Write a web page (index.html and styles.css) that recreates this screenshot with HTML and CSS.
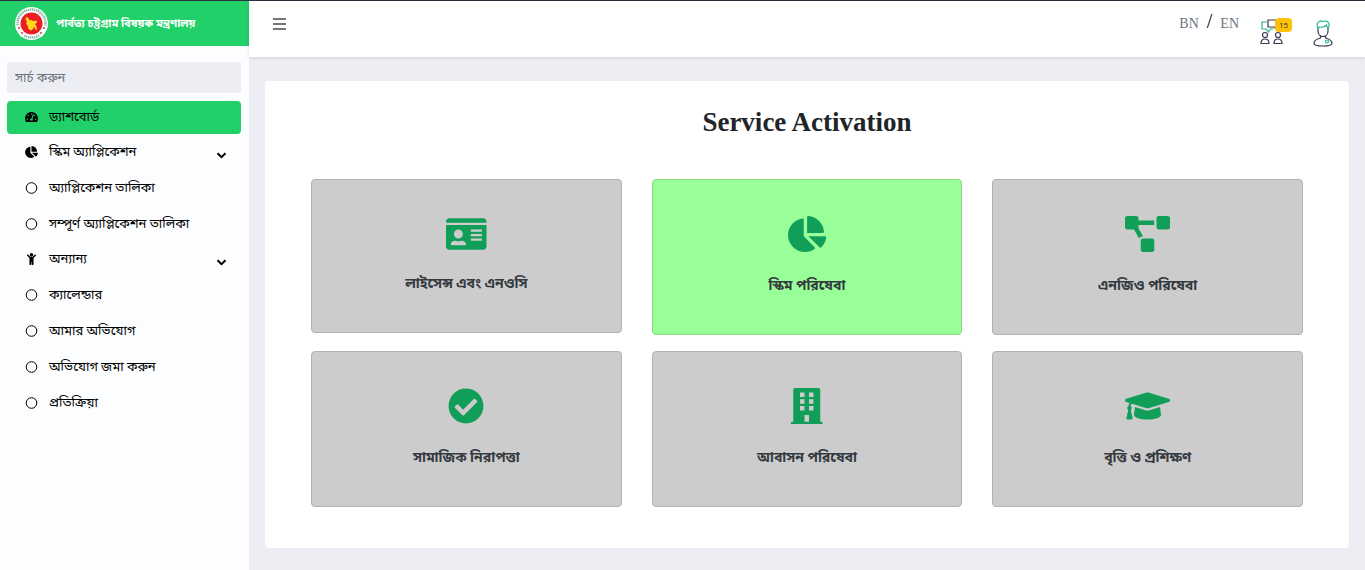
FILE: index.html
```html
<!DOCTYPE html>
<html lang="bn">
<head>
<meta charset="utf-8">
<meta name="viewport" content="width=device-width, initial-scale=1">
<title>Service Activation</title>
<link rel="stylesheet" href="styles.css">
</head>
<body>
<svg class="defs" aria-hidden="true">
  <symbol id="pie" viewBox="0 0 544 512"><path d="M527.79 288H290.5l158.03 158.03c6.04 6.04 15.98 6.53 22.19.68 38.7-36.46 65.32-85.61 73.13-140.86 1.34-9.46-6.51-17.85-16.06-17.85zm-15.83-64.8C503.72 103.74 408.26 8.28 288.8.04 279.68-.59 272 7.1 272 16.24V240h223.77c9.14 0 16.82-7.68 16.19-16.8zM224 288V50.71c0-9.55-8.39-17.4-17.84-16.06C86.99 51.49-4.1 155.6.14 280.37 4.5 408.51 114.83 513.59 243.03 511.98c50.4-.63 96.97-16.87 135.26-44.03 7.9-5.6 8.42-17.23 1.57-24.08L224 288z"/></symbol>
  <symbol id="ring" viewBox="0 0 12 12"><circle cx="6" cy="6" r="5.3" fill="none" stroke="currentColor"/></symbol>
  <symbol id="chevron" viewBox="0 0 10 7"><path d="M1 1.2l4 4 4-4" fill="none" stroke="currentColor" stroke-width="2"/></symbol>
</svg>
<div class="app">
  <aside class="sidebar">
    <a class="brand" href="#">
      <svg class="brand-logo" viewBox="0 0 66 66" aria-hidden="true">
        <circle cx="33" cy="33" r="33" fill="#fff"/>
        <circle cx="33" cy="33" r="28" fill="none" stroke="#7fb9a0" stroke-width="5" stroke-dasharray="2.5 1.5"/>
        <path d="M2 38l9 -1 8 19 -7 4zM64 38l-9 -1 -8 19 7 4z" fill="#fff"/>
        <g fill="#e5323a"><circle cx="8" cy="42" r="2"/><circle cx="14" cy="52" r="2"/><circle cx="58" cy="42" r="2"/><circle cx="52" cy="52" r="2"/></g>
        <circle cx="33" cy="33" r="22" fill="#ec1c24"/>
        <path d="M22 20l5 2 2 5 4-1 3 2 7-1 1 4-4 3 3 5 1 8-4-3-2-5-2 5-4 3-5-3-2-7-3-4 2-3-3-5z" fill="#fcd91c"/>
      </svg>
      <span>পার্বত্য চট্টগ্রাম বিষয়ক মন্ত্রণালয়</span>
    </a>
    <div class="side-body">
      <input class="search" type="search" placeholder="সার্চ করুন" aria-label="সার্চ করুন">
      <nav class="menu">
        <a class="item active" href="#"><svg class="mi" viewBox="0 0 576 512"><path d="M288 32C128.94 32 0 160.94 0 320c0 52.8 14.25 102.26 39.06 144.8 5.61 9.62 16.3 15.2 27.44 15.2h443c11.14 0 21.83-5.58 27.44-15.2C561.75 422.26 576 372.8 576 320c0-159.06-128.94-288-288-288zm0 64c14.71 0 26.58 10.13 30.32 23.65-1.11 2.26-2.64 4.23-3.45 6.67l-9.22 27.67c-5.13 3.49-10.97 6.01-17.64 6.01-17.67 0-32-14.33-32-32S270.33 96 288 96zM96 384c-17.67 0-32-14.33-32-32s14.33-32 32-32 32 14.33 32 32-14.33 32-32 32zm48-160c-17.67 0-32-14.33-32-32s14.33-32 32-32 32 14.33 32 32-14.33 32-32 32zm246.77-72.41l-61.33 184C343.13 347.33 352 364.54 352 384c0 11.72-3.38 22.55-8.88 32H232.88c-5.5-9.45-8.88-20.28-8.88-32 0-33.94 26.5-61.43 59.9-63.59l61.34-184.01c4.17-12.56 17.73-19.45 30.36-15.17 12.57 4.19 19.35 17.79 15.17 30.36zm14.66 57.2l15.52-46.55c3.47-1.29 7.13-2.23 11.05-2.23 17.67 0 32 14.33 32 32s-14.33 32-32 32c-11.38-.01-20.89-6.28-26.57-15.22zM480 384c-17.67 0-32-14.33-32-32s14.33-32 32-32 32 14.33 32 32-14.33 32-32 32z"/></svg><span>ড্যাশবোর্ড</span></a>
        <button class="item toggle" type="button"><svg class="mi"><use href="#pie"/></svg><span>স্কিম অ্যাপ্লিকেশন</span><svg class="chev"><use href="#chevron"/></svg></button>
        <a class="item" href="#"><svg class="mi"><use href="#ring"/></svg><span>অ্যাপ্লিকেশন তালিকা</span></a>
        <a class="item" href="#"><svg class="mi"><use href="#ring"/></svg><span>সম্পূর্ণ অ্যাপ্লিকেশন তালিকা</span></a>
        <button class="item toggle" type="button"><svg class="mi" viewBox="0 0 384 512"><path d="M120 72c0-39.765 32.235-72 72-72s72 32.235 72 72c0 39.764-32.235 72-72 72s-72-32.236-72-72zm254.627 1.373c-12.496-12.497-32.758-12.497-45.254 0L242.745 160H141.254L54.627 73.373c-12.496-12.497-32.758-12.497-45.254 0-12.497 12.497-12.497 32.758 0 45.255L104 213.254V480c0 17.673 14.327 32 32 32h16c17.673 0 32-14.327 32-32V368h16v112c0 17.673 14.327 32 32 32h16c17.673 0 32-14.327 32-32V213.254l94.627-94.627c12.497-12.497 12.497-32.757 0-45.254z"/></svg><span>অন্যান্য</span><svg class="chev"><use href="#chevron"/></svg></button>
        <a class="item" href="#"><svg class="mi"><use href="#ring"/></svg><span>ক্যালেন্ডার</span></a>
        <a class="item" href="#"><svg class="mi"><use href="#ring"/></svg><span>আমার অভিযোগ</span></a>
        <a class="item" href="#"><svg class="mi"><use href="#ring"/></svg><span>অভিযোগ জমা করুন</span></a>
        <a class="item" href="#"><svg class="mi"><use href="#ring"/></svg><span>প্রতিক্রিয়া</span></a>
      </nav>
    </div>
  </aside>
  <div class="page">
    <header class="topbar">
      <button class="burger" type="button" aria-label="Menu"><svg viewBox="0 0 13 12"><path d="M0 1h13M0 6h13M0 11h13" stroke="currentColor" stroke-width="2"/></svg></button>
      <div class="lang"><a href="#">BN</a><span class="slash">/</span><a href="#">EN</a></div>
      <button class="notify" type="button" aria-label="Notifications">
        <svg class="line-icon" viewBox="0 0 24 26">
          <path d="M7 3H2v7h4l2.500 3 2-3h3" stroke="#2bb594"/>
          <path d="M22 1H8v7h6l4 3V8" stroke="#3a3750"/>
          <g stroke="#3a3750"><circle cx="5" cy="16" r="2.500"/><path d="M1 24.500c0-3 1.500-4.500 4-4.500s4 1.500 4 4.500z"/><circle cx="18" cy="16" r="2.500"/><path d="M14 24.500c0-3 1.500-4.500 4-4.500s4 1.500 4 4.500z"/></g>
        </svg>
        <span class="badge">15</span>
      </button>
      <button class="user" type="button" aria-label="User">
        <svg class="line-icon" viewBox="0 0 20 27">
          <path d="M5 8v3c0 3 2 5.500 5 5.500s5-2.500 5-5.500V8M7.500 15.500v2.500c-4 1-6.500 2.500-6.500 5.500 0 1.500 2 2.500 9 2.500s9-1 9-2.500c0-3-2.500-4.500-6.500-5.500v-2.500" stroke="#3a3750"/>
          <path d="M5 8C3.500 5 4 2 6 2c1-1.500 3-1 4-.5 2-1 5-.5 5.500 1.500 1 1.500.5 3.500-.5 5-1-1-1.500-2-1.500-3-2 2-5 2.500-7 2z" stroke="#2bb594"/>
          <circle cx="14" cy="21.500" r="1.500" stroke="#2bb594"/>
        </svg>
      </button>
    </header>
    <main class="content">
      <section class="panel">
        <h1 class="title">Service Activation</h1>
        <div class="cards">
          <a class="card compact" href="#"><svg viewBox="0 0 576 512"><path fill-rule="evenodd" d="M528 32H48C21.500 32 0 53.500 0 80v16h576V80c0-26.500-21.500-48-48-48zM0 432c0 26.500 21.500 48 48 48h480c26.500 0 48-21.500 48-48V128H0zM352 200q0-8 8-8h144q8 0 8 8v16q0 8-8 8H360q-8 0-8-8zm0 64q0-8 8-8h144q8 0 8 8v16q0 8-8 8H360q-8 0-8-8zm0 64q0-8 8-8h144q8 0 8 8v16q0 8-8 8H360q-8 0-8-8zM176 192c35.300 0 64 28.700 64 64s-28.700 64-64 64-64-28.700-64-64 28.700-64 64-64zM67 396c8-26 32-44 61-44h8c12 5 26 8 40 8s28-3 40-8h8c29 0 53 18 61 44 3 10-5 20-15 20H83c-11 0-19-10-16-20z"/></svg><span>লাইসেন্স এবং এনওসি</span></a>
          <a class="card selected" href="#"><svg viewBox="0 0 544 512"><use href="#pie"/></svg><span>স্কিম পরিষেবা</span></a>
          <a class="card" href="#"><svg viewBox="0 0 640 512"><path d="M384 320H256c-17.670 0-32 14.330-32 32v128c0 17.670 14.330 32 32 32h128c17.670 0 32-14.330 32-32V352c0-17.670-14.330-32-32-32zM192 32c0-17.670-14.330-32-32-32H32C14.330 0 0 14.330 0 32v128c0 17.670 14.330 32 32 32h95.720l73.160 128.040C211.980 300.980 232.400 288 256 288h.280L192 175.510V128h224V64H192V32zM608 0H480c-17.670 0-32 14.330-32 32v128c0 17.670 14.330 32 32 32h128c17.670 0 32-14.330 32-32V32c0-17.670-14.330-32-32-32z"/></svg><span>এনজিও পরিষেবা</span></a>
          <a class="card" href="#"><svg viewBox="0 0 512 512"><path d="M504 256c0 136.967-111.033 248-248 248S8 392.967 8 256 119.033 8 256 8s248 111.033 248 248zM227.314 387.314l184-184c6.248-6.248 6.248-16.379 0-22.627l-22.627-22.627c-6.248-6.249-16.379-6.249-22.628 0L216 308.118l-70.059-70.059c-6.248-6.248-16.379-6.248-22.628 0l-22.627 22.627c-6.248 6.248-6.248 16.379 0 22.627l104 104c6.249 6.249 16.379 6.249 22.628.001z"/></svg><span>সামাজিক নিরাপত্তা</span></a>
          <a class="card" href="#"><svg viewBox="0 0 448 512"><path fill-rule="evenodd" d="M436 480h-20V24c0-13-11-24-24-24H56C43 0 32 11 32 24v456H12c-7 0-12 5-12 12v20h448v-20c0-7-5-12-12-12zM128 64h64v64h-64zM256 64h64v64h-64zM128 160h64v64h-64zM256 160h64v64h-64zM128 256h64v64h-64zM256 256h64v64h-64zM192 384h64v96h-64z"/></svg><span>আবাসন পরিষেবা</span></a>
          <a class="card" href="#"><svg viewBox="0 0 640 512"><path d="M622.340 153.200L343.400 67.500c-15.200-4.670-31.600-4.670-46.790 0L17.660 153.200c-23.540 7.230-23.540 38.360 0 45.590l48.630 14.940c-10.670 13.190-17.230 29.280-17.880 46.900C38.780 266.150 32 276.110 32 288c0 10.780 5.680 19.850 13.860 25.650L20.330 428.530C18.110 438.520 25.710 448 35.940 448h56.110c10.240 0 17.840-9.480 15.620-19.470L82.140 313.650C90.320 307.850 96 298.780 96 288c0-11.570-6.470-21.250-15.660-26.870.76-15.020 8.440-28.300 20.690-36.720L296.600 284.500c9.060 2.780 26.440 6.250 46.790 0l278.950-85.700c23.550-7.240 23.550-38.360 0-45.600zM352.790 315.090c-28.530 8.760-52.840 3.920-65.590 0l-145.020-44.550L128 384c0 35.350 85.960 64 192 64s192-28.650 192-64l-14.180-113.470-145.030 44.560z"/></svg><span>বৃত্তি ও প্রশিক্ষণ</span></a>
        </div>
      </section>
    </main>
  </div>
</div>
</body>
</html>
```
FILE: styles.css
```css
* { box-sizing: border-box; }

body {
  margin: 0;
  background: #edeef4;
  color: #212529;
  font-family: "Liberation Serif", "Noto Sans Bengali", "Noto Serif Bengali", "Noto Sans", serif;
  font-size: 16px;
}

a { color: inherit; text-decoration: none; }

button {
  border: 0;
  padding: 0;
  background: none;
  color: inherit;
  font: inherit;
  cursor: pointer;
}

svg { display: block; fill: currentColor; }

.line-icon { fill: none; stroke-width: 1.2; }

.defs { display: none; }

.app {
  display: flex;
  min-height: 100vh;
  border-top: 1px solid #2f2d3d;
}

.sidebar {
  flex: 0 0 249px;
  background: #fcfdff;
}

.brand {
  display: flex;
  align-items: center;
  gap: 8px;
  height: 45px;
  padding-left: 15px;
  background: #22d06a;
  color: #fff;
  font-size: 11px;
  font-weight: 700;
  white-space: nowrap;
}

.brand-logo { width: 33px; height: 33px; }

.side-body { padding: 16px 8px 16px 7px; }

.search {
  display: block;
  width: 100%;
  height: 31px;
  margin-bottom: 8px;
  padding: 0 8px;
  border: 0;
  border-radius: 3px;
  background: #edeef4;
  font: inherit;
  font-size: 13px;
}

.search::placeholder { color: #6c757d; opacity: 1; }

.menu {
  display: flex;
  flex-direction: column;
  gap: 3px;
}

.item {
  display: flex;
  align-items: center;
  gap: 11px;
  height: 33px;
  padding: 0 14px 2px 18px;
  border-radius: 4px;
  color: #000;
  font-size: 13px;
  line-height: 20px;
  text-align: left;
  white-space: nowrap;
}

.item span { flex: 1; }

.toggle { height: 32px; }

.active { background: #22d06a; }

.mi { width: 13px; height: 12px; }

.chev { width: 11px; height: 7px; margin-top: 6px; }

.page { flex: 1; min-width: 0; }

.topbar {
  display: flex;
  align-items: center;
  height: 56px;
  padding: 0 32px 0 24px;
  background: #fff;
  box-shadow: 0 1px 4px rgba(0, 0, 0, 0.12);
}

.burger {
  margin: 0 auto 10px 0;
  color: #777;
}

.burger svg { width: 13px; height: 12px; }

.lang {
  display: flex;
  align-items: center;
  gap: 8px;
  margin: 0 21px 10px 0;
  color: #6c757d;
  font-size: 14px;
}

.slash {
  padding-bottom: 6px;
  color: #000;
  font-size: 20px;
}

.notify {
  position: relative;
  margin: 6px 29px 0 0;
}

.notify svg { width: 24px; height: 26px; }

.badge {
  position: absolute;
  top: -1px;
  left: 15px;
  padding: 0 4px;
  border-radius: 4px;
  background: #ffc107;
  color: #1f2d3d;
  font-family: "Open Sans", sans-serif;
  font-size: 8px;
  line-height: 14px;
}

.user { margin-top: 8px; }

.user svg { width: 20px; height: 27px; }

.content { padding: 24px 16px 22px; }

.panel {
  padding: 24px 46px 41px;
  border-radius: 4px;
  background: #fff;
}

.title {
  margin: 0 0 40px;
  font-size: 27px;
  font-weight: 700;
  line-height: 34px;
  text-align: center;
}

.cards {
  display: grid;
  grid-template-columns: repeat(3, 1fr);
  align-items: start;
  gap: 16px 30px;
}

.card {
  display: flex;
  flex-direction: column;
  align-items: center;
  gap: 22px;
  padding: 36px 16px;
  border: 1px solid #b1b1b1;
  border-radius: 4px;
  background: #ccc;
  color: #343a40;
  font-size: 14px;
  font-weight: 700;
  line-height: 24px;
  text-align: center;
}

.card svg { height: 36px; color: #119e59; }

.compact { gap: 20px; }

.selected { border-color: #85dc85; background: #9f9; }
```
